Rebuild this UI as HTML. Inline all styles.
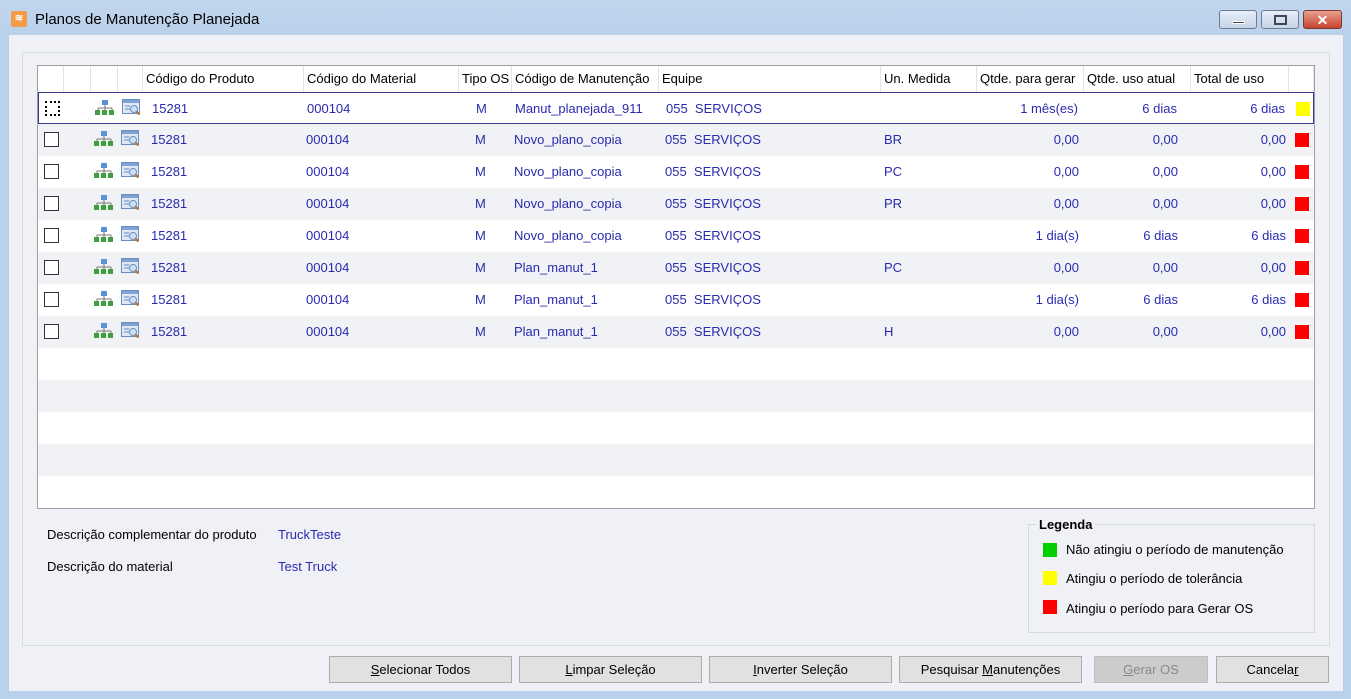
<!DOCTYPE html>
<html><head><meta charset="utf-8"><style>
*{margin:0;padding:0;box-sizing:border-box}
body{width:1351px;height:699px;overflow:hidden;background:#b9d1ea;font-family:"Liberation Sans",sans-serif;font-size:13px;position:relative}
.abs{position:absolute}
#title{left:0;top:0;width:1351px;height:36px;background:linear-gradient(#c3d6ee,#b9d1ea)}
#client{left:9px;top:35px;width:1334px;height:656px;background:#f0f1f6}
#panel{left:22px;top:52px;width:1308px;height:594px;border:1px solid #d8dbe0}
#grid{left:37px;top:65px;width:1278px;height:444px;background:#fff;border:1px solid #a0a0a0}
.hd{position:absolute;top:0;height:26px;line-height:26px;border-right:1px solid #e4e4e4;padding-left:3px;color:#000;white-space:nowrap;overflow:hidden}
.row{position:absolute;left:0;width:1276px;height:32px}
.row.g{background:#f0f2f5}
.c{position:absolute;top:0;height:32px;line-height:32px;color:#2a2ab0;white-space:nowrap}
.r{text-align:right}
.cb{position:absolute;left:6px;top:8px;width:15px;height:15px;border:1px solid #333;background:#fff}
.sq{position:absolute;left:1257px;top:9px;width:14px;height:14px}
.btn{position:absolute;top:656px;height:27px;border:1px solid #adadad;background:#e1e1e1;text-align:center;line-height:25px;color:#000}
u{text-decoration:underline}
</style></head><body>
<div class="abs" id="title">
<div class="abs" style="left:11px;top:11px;width:16px;height:16px;background:#f59a45;border-radius:2px;color:#fff;font-size:10px;line-height:16px;text-align:center;font-weight:bold">≋</div>
<div class="abs" style="left:35px;top:11px;font-size:15px;color:#000">Planos de Manutenção Planejada</div>
<div class="abs" style="left:1219px;top:10px;width:38px;height:19px;border:1px solid #6d7c94;border-radius:3px;background:linear-gradient(#e6eef8,#c5d4e8)"><div class="abs" style="left:12px;top:10px;width:13px;height:3px;background:#445;border:1px solid #fff"></div></div>
<div class="abs" style="left:1261px;top:10px;width:38px;height:19px;border:1px solid #6d7c94;border-radius:3px;background:linear-gradient(#e6eef8,#c5d4e8)"><div class="abs" style="left:12px;top:4px;width:13px;height:10px;border:2px solid #445"></div></div>
<div class="abs" style="left:1303px;top:10px;width:39px;height:19px;border:1px solid #7a3a30;border-radius:3px;background:linear-gradient(#e8a090,#c7442f);color:#fff;font-weight:bold;text-align:center;line-height:18px;font-size:14px">✕</div>
</div>
<div class="abs" id="client"></div>
<div class="abs" id="panel"></div>
<div class="abs" id="grid">
<div class="hd" style="left:0;width:26px"></div>
<div class="hd" style="left:26px;width:27px"></div>
<div class="hd" style="left:53px;width:27px"></div>
<div class="hd" style="left:80px;width:25px"></div>
<div class="hd" style="left:105px;width:161px">Código do Produto</div>
<div class="hd" style="left:266px;width:155px">Código do Material</div>
<div class="hd" style="left:421px;width:53px">Tipo OS</div>
<div class="hd" style="left:474px;width:147px">Código de Manutenção</div>
<div class="hd" style="left:621px;width:222px">Equipe</div>
<div class="hd" style="left:843px;width:96px">Un. Medida</div>
<div class="hd" style="left:939px;width:107px">Qtde. para gerar</div>
<div class="hd" style="left:1046px;width:107px">Qtde. uso atual</div>
<div class="hd" style="left:1153px;width:98px">Total de uso</div>
<div class="hd" style="left:1251px;width:25px"></div>
<div id="rows"></div>
</div>
<script></script>
<div class="abs" style="left:47px;top:527px;color:#000">Descrição complementar do produto</div>
<div class="abs" style="left:278px;top:527px;color:#2a2ab0">TruckTeste</div>
<div class="abs" style="left:47px;top:559px;color:#000">Descrição do material</div>
<div class="abs" style="left:278px;top:559px;color:#2a2ab0">Test Truck</div>
<div class="abs" style="left:1028px;top:524px;width:287px;height:109px;border:1px solid #d5d8dd"></div>
<div class="abs" style="left:1036px;top:517px;background:#f0f1f6;padding:0 3px;font-weight:bold">Legenda</div>
<div class="abs" style="left:1043px;top:543px;width:14px;height:14px;background:#00d000"></div>
<div class="abs" style="left:1066px;top:542px">Não atingiu o período de manutenção</div>
<div class="abs" style="left:1043px;top:571px;width:14px;height:14px;background:#ffff00"></div>
<div class="abs" style="left:1066px;top:571px">Atingiu o período de tolerância</div>
<div class="abs" style="left:1043px;top:600px;width:14px;height:14px;background:#ff0000"></div>
<div class="abs" style="left:1066px;top:601px">Atingiu o período para Gerar OS</div>
<div class="btn" style="left:329px;width:183px"><u>S</u>elecionar Todos</div>
<div class="btn" style="left:519px;width:183px"><u>L</u>impar Seleção</div>
<div class="btn" style="left:709px;width:183px"><u>I</u>nverter Seleção</div>
<div class="btn" style="left:899px;width:183px">Pesquisar <u>M</u>anutenções</div>
<div class="btn" style="left:1094px;width:114px;background:#cccccc;border-color:#bfbfbf;color:#8a8a8a"><u>G</u>erar OS</div>
<div class="btn" style="left:1216px;width:113px">Cancela<u>r</u></div>
<div id="rowsrc" style="display:none"></div>
<!-- rows -->
<div class="abs" style="left:38px;top:92px;width:1276px;height:416px">
<div class="row" style="top:0;border:1px solid #3a3a8c"><div class="cb" style="border:2px dotted #000"></div>
<svg class="abs" style="left:56px;top:7px" width="20" height="16"><rect x="7" y="0" width="6" height="5" fill="#5b8fd6"/><path d="M10 5v3M3 8h14M3 8v2M10 8v2M17 8v2" stroke="#777" fill="none"/><rect x="0" y="10" width="5" height="5" fill="#3fa03f"/><rect x="7" y="10" width="5" height="5" fill="#3fa03f"/><rect x="14" y="10" width="5" height="5" fill="#3fa03f"/></svg>
<svg class="abs" style="left:83px;top:5px" width="20" height="20"><rect x="0.5" y="1.5" width="17" height="14" fill="#dfe8f4" stroke="#6a8fbf"/><rect x="1" y="2" width="16" height="3" fill="#7fa4d4"/><path d="M3 8h5M3 11h5" stroke="#6a8fbf"/><circle cx="12" cy="11" r="3.5" fill="#cfe0f5" stroke="#6a8fbf"/><path d="M14.5 13.5l3 3" stroke="#b07030" stroke-width="2"/></svg>
<div class="c" style="left:113px">15281</div><div class="c" style="left:268px">000104</div><div class="c" style="left:437px">M</div><div class="c" style="left:476px">Manut_planejada_911</div><div class="c" style="left:627px">055&nbsp; SERVIÇOS</div><div class="c" style="left:846px"></div><div class="c r" style="right:235px">1 mês(es)</div><div class="c r" style="right:136px">6 dias</div><div class="c r" style="right:28px">6 dias</div><div class="sq" style="background:#ffff00"></div></div>
</div>
<script>
var d=[["Novo_plano_copia","BR","0,00","0,00","0,00"],["Novo_plano_copia","PC","0,00","0,00","0,00"],["Novo_plano_copia","PR","0,00","0,00","0,00"],["Novo_plano_copia","","1 dia(s)","6 dias","6 dias"],["Plan_manut_1","PC","0,00","0,00","0,00"],["Plan_manut_1","","1 dia(s)","6 dias","6 dias"],["Plan_manut_1","H","0,00","0,00","0,00"]];
var host=document.querySelectorAll('body > .abs');host=host[host.length-1];
var ic='<svg class="abs" style="left:56px;top:7px" width="20" height="16"><rect x="7" y="0" width="6" height="5" fill="#5b8fd6"/><path d="M10 5v3M3 8h14M3 8v2M10 8v2M17 8v2" stroke="#777" fill="none"/><rect x="0" y="10" width="5" height="5" fill="#3fa03f"/><rect x="7" y="10" width="5" height="5" fill="#3fa03f"/><rect x="14" y="10" width="5" height="5" fill="#3fa03f"/></svg><svg class="abs" style="left:83px;top:5px" width="20" height="20"><rect x="0.5" y="1.5" width="17" height="14" fill="#dfe8f4" stroke="#6a8fbf"/><rect x="1" y="2" width="16" height="3" fill="#7fa4d4"/><path d="M3 8h5M3 11h5" stroke="#6a8fbf"/><circle cx="12" cy="11" r="3.5" fill="#cfe0f5" stroke="#6a8fbf"/><path d="M14.5 13.5l3 3" stroke="#b07030" stroke-width="2"/></svg>';
var h='';
for(var i=0;i<7;i++){var r=d[i];h+='<div class="row'+(i%2==0?' g':'')+'" style="top:'+(32*(i+1))+'px"><div class="cb"></div>'+ic+'<div class="c" style="left:113px">15281</div><div class="c" style="left:268px">000104</div><div class="c" style="left:437px">M</div><div class="c" style="left:476px">'+r[0]+'</div><div class="c" style="left:627px">055&nbsp; SERVIÇOS</div><div class="c" style="left:846px">'+r[1]+'</div><div class="c r" style="right:235px">'+r[2]+'</div><div class="c r" style="right:136px">'+r[3]+'</div><div class="c r" style="right:28px">'+r[4]+'</div><div class="sq" style="background:#ff0000"></div></div>';}
h+='<div class="row g" style="top:288px"></div><div class="row g" style="top:352px"></div>';
host.insertAdjacentHTML('beforeend',h);
</script>
</body></html>
